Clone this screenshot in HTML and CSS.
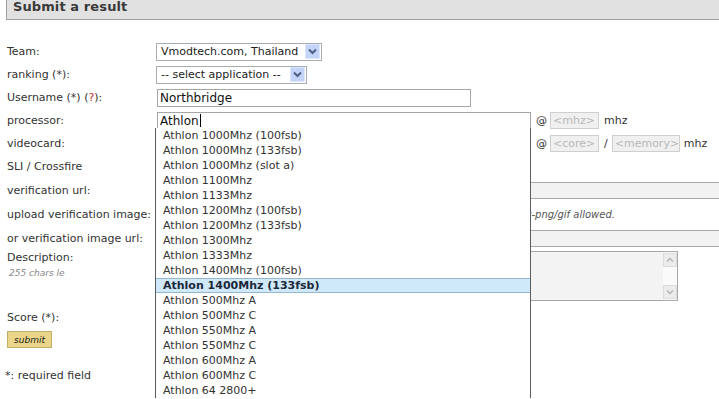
FILE: index.html
```html
<!DOCTYPE html>
<html lang="en">
<head>
    <meta charset="UTF-8">
    <title>Submit a result</title>
    <link rel="stylesheet" href="styles.css">
</head>
<body>
    <div class="page">
        <h2 class="box-title">Submit a result</h2>

        <form class="result-form">
            <div class="row">
                <label class="field-label">Team:</label>
                <div class="fake-select team-select">
                    <span class="select-text">Vmodtech.com, Thailand</span>
                    <svg class="select-arrow" width="15" height="15" viewBox="0 0 15 15"><rect x="0.5" y="0.5" width="14" height="14" fill="#c3d3f9" stroke="#dde7fc"/><polyline points="4,5.5 7.5,9 11,5.5" fill="none" stroke="#4d6185" stroke-width="2"/></svg>
                </div>
            </div>
            <div class="row">
                <label class="field-label">ranking (*):</label>
                <div class="fake-select ranking-select">
                    <span class="select-text">-- select application --</span>
                    <svg class="select-arrow" width="15" height="15" viewBox="0 0 15 15"><rect x="0.5" y="0.5" width="14" height="14" fill="#c3d3f9" stroke="#dde7fc"/><polyline points="4,5.5 7.5,9 11,5.5" fill="none" stroke="#4d6185" stroke-width="2"/></svg>
                </div>
            </div>
            <div class="row">
                <label class="field-label">Username (*) (<span class="help">?</span>):</label>
                <div class="text-input username-input">Northbridge</div>
            </div>
            <div class="row">
                <label class="field-label">processor:</label>
                <div class="text-input long-input">Athlon<span class="caret"></span></div>
                <span class="at">@</span>
                <div class="small-input">&lt;mhz&gt;</div>
                <span class="unit">mhz</span>
            </div>
            <div class="row">
                <label class="field-label">videocard:</label>
                <div class="text-input long-input"></div>
                <span class="at">@</span>
                <div class="small-input">&lt;core&gt;</div>
                <span class="slash">/</span>
                <div class="small-input memory-input">&lt;memory&gt;</div>
                <span class="unit unit-tight">mhz</span>
            </div>
            <div class="row">
                <label class="field-label">SLI / Crossfire</label>
            </div>
            <div class="row row-tall">
                <label class="field-label">verification url:</label>
                <div class="wide-input"></div>
            </div>
            <div class="row row-tall">
                <label class="field-label">upload verification image:</label>
                <div class="file-box"></div>
                <span class="file-note">jpg-png/gif allowed.</span>
            </div>
            <div class="row row-tall">
                <label class="field-label">or verification image url:</label>
                <div class="wide-input"></div>
            </div>
            <div class="row row-desc">
                <div class="field-label">
                    <label>Description:</label>
                    <span class="chars-left">255 chars le</span>
                </div>
                <div class="fake-textarea">
                    <div class="textarea-body"></div>
                    <div class="scrollbar">
                        <svg width="14" height="14" viewBox="0 0 14 14"><rect x="0.5" y="0.5" width="13" height="13" fill="#ececec" stroke="#dcdcdc"/><polyline points="4,8.5 7,5.5 10,8.5" fill="none" stroke="#b4b4b4" stroke-width="1.5"/></svg>
                        <svg width="14" height="14" viewBox="0 0 14 14"><rect x="0.5" y="0.5" width="13" height="13" fill="#ececec" stroke="#dcdcdc"/><polyline points="4,5.5 7,8.5 10,5.5" fill="none" stroke="#b4b4b4" stroke-width="1.5"/></svg>
                    </div>
                </div>
            </div>
            <div class="row">
                <label class="field-label">Score (*):</label>
            </div>
            <button type="button" class="submit-btn">submit</button>
        </form>

        <p class="required-note">*: required field</p>

        <ul class="suggest">
            <li>Athlon 1000Mhz (100fsb)</li>
            <li>Athlon 1000Mhz (133fsb)</li>
            <li>Athlon 1000Mhz (slot a)</li>
            <li>Athlon 1100Mhz</li>
            <li>Athlon 1133Mhz</li>
            <li>Athlon 1200Mhz (100fsb)</li>
            <li>Athlon 1200Mhz (133fsb)</li>
            <li>Athlon 1300Mhz</li>
            <li>Athlon 1333Mhz</li>
            <li>Athlon 1400Mhz (100fsb)</li>
            <li class="active">Athlon 1400Mhz (133fsb)</li>
            <li>Athlon 500Mhz A</li>
            <li>Athlon 500Mhz C</li>
            <li>Athlon 550Mhz A</li>
            <li>Athlon 550Mhz C</li>
            <li>Athlon 600Mhz A</li>
            <li>Athlon 600Mhz C</li>
            <li>Athlon 64 2800+</li>
        </ul>
    </div>
</body>
</html>
```

FILE: styles.css
```css
html, body {
    margin: 0;
    height: 399px;
    overflow: hidden;
    background: #fff;
}

body {
    font-family: 'DejaVu Sans', Verdana, sans-serif;
    font-size: 11px;
    color: #333;
}

.page {
    position: relative;
    height: 399px;
}

.box-title {
    margin: 0 0 0 6px;
    height: 19px;
    padding-left: 6px;
    background: #e1e1e1;
    border-left: 1px solid #a0a0a0;
    border-bottom: 1px solid #a0a0a0;
    font-size: 13px;
    line-height: 14px;
    font-weight: bold;
    color: #3a3a3a;
    letter-spacing: 0.1px;
}

.result-form {
    padding: 20px 0 0 7px;
}

.row {
    display: flex;
    align-items: center;
    height: 23px;
    white-space: nowrap;
}

.row-tall {
    height: 24px;
}

.field-label {
    width: 150px;
    flex: none;
}

.help {
    color: #c03030;
}

.fake-select {
    display: flex;
    align-items: center;
    justify-content: space-between;
    box-sizing: border-box;
    height: 18px;
    padding: 0 1px 0 4px;
    border: 1px solid #a5acb2;
    background: #fff;
    color: #222;
}

.team-select {
    width: 166px;
    margin-left: -1px;
}

.ranking-select {
    width: 151px;
    margin-left: -1px;
}

.select-arrow {
    display: block;
}

.text-input {
    box-sizing: border-box;
    height: 18px;
    padding: 0 2px;
    border: 1px solid #a5a5a5;
    background: #fff;
    color: #111;
    font-size: 12px;
    line-height: 16px;
}

.username-input {
    width: 314px;
}

.long-input {
    width: 374px;
}

.caret {
    display: inline-block;
    width: 1px;
    height: 13px;
    margin-left: 1px;
    vertical-align: -2px;
    background: #000;
}

.at {
    margin: 0 3px 0 5px;
}

.small-input {
    box-sizing: border-box;
    width: 49px;
    height: 17px;
    padding-left: 2px;
    border: 1px solid #cfcfcf;
    background: #f0f0f0;
    color: #b8b8b8;
    font-size: 11px;
    line-height: 15px;
}

.memory-input {
    width: 68px;
}

.unit {
    margin-left: 5px;
}

.unit-tight {
    margin-left: 4px;
}

.slash {
    margin: 0 4px 0 5px;
}

.wide-input {
    flex: none;
    box-sizing: border-box;
    width: 620px;
    height: 17px;
    border: 1px solid #a8a8a8;
    background: #f2f2f2;
}

.file-box {
    flex: none;
    width: 353px;
    height: 17px;
}

.file-note {
    margin-left: 6px;
    font-size: 10px;
    font-style: italic;
    color: #555;
}

.row-desc {
    align-items: flex-start;
    height: 56px;
    padding-top: 1px;
    box-sizing: border-box;
}

.row-desc .field-label {
    line-height: 13px;
}

.row-desc label {
    display: block;
}

.chars-left {
    display: block;
    margin: 3px 0 0 2px;
    font-size: 9px;
    font-style: italic;
    color: #888;
}

.fake-textarea {
    display: flex;
    box-sizing: border-box;
    width: 521px;
    height: 50px;
    border: 1px solid #a8a8a8;
    background: #f3f3f3;
}

.textarea-body {
    flex: 1;
}

.scrollbar {
    display: flex;
    flex-direction: column;
    justify-content: space-between;
    width: 14px;
    padding: 1px 0;
    background: #fafafa;
}

.scrollbar svg {
    display: block;
}

.submit-btn {
    display: block;
    box-sizing: border-box;
    width: 45px;
    height: 17px;
    margin-top: 2px;
    padding: 0;
    border: 1px solid #c4ae6c;
    background: #ead58b;
    font-family: 'DejaVu Sans', Verdana, sans-serif;
    font-size: 9px;
    font-style: italic;
    color: #1a1a1a;
}

.required-note {
    margin: 21px 0 0 5px;
    line-height: 13px;
}

.suggest {
    position: absolute;
    left: 155px;
    top: 128px;
    width: 376px;
    box-sizing: border-box;
    margin: 0;
    padding: 0;
    list-style: none;
    background: #fff;
    border-left: 1px solid #5c5c5c;
    border-right: 1px solid #5c5c5c;
}

.suggest li {
    box-sizing: border-box;
    height: 15px;
    padding-left: 7px;
    line-height: 15px;
    color: #333;
}

.suggest li.active {
    background: #cfe9fa;
    border-top: 1px solid #94b8d0;
    border-bottom: 1px solid #94b8d0;
    line-height: 13px;
    font-weight: bold;
    color: #1c2838;
}
```
